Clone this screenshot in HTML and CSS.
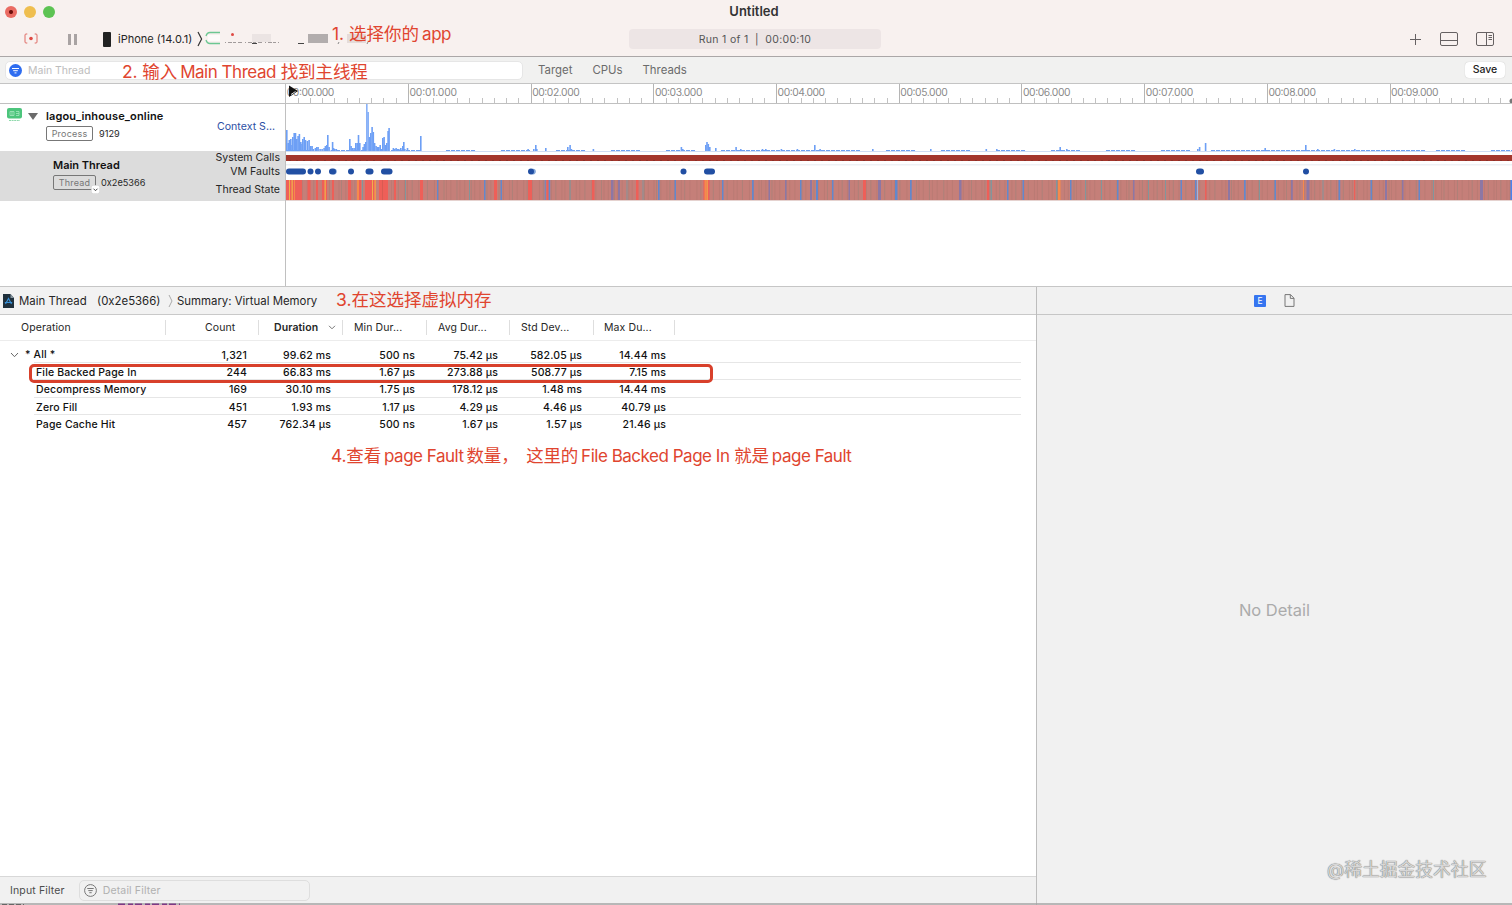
FILE: index.html
```html
<!DOCTYPE html>
<html lang="zh-CN">
<head>
  <meta charset="UTF-8" />
  <meta name="viewport" content="width=device-width, initial-scale=1.0" />
  <title>Untitled</title>
  <link rel="stylesheet" href="styles.css">
</head>
<body>
  <div class="window">
    <header class="titlebar">
      <div class="lights"><i class="red"></i><i class="yellow"></i><i class="green"></i></div>
      <div class="window-title">Untitled</div>
      <div class="toolbar">
        <svg class="record" width="14" height="14" viewBox="0 0 14 14" fill="none" stroke="#df6a64" stroke-width="1"><path d="M3.300 2H2Q1 2 1 3v7q0 1 1 1h1.300M10.700 2H12q1 0 1 1v7q0 1-1 1h-1.300"/><circle cx="7" cy="6.500" r="1.800" fill="#df4a44" stroke="none"/></svg>
        <div class="pause"><i></i><i></i></div>
        <div class="phone"></div>
        <span class="device">iPhone (14.0.1)</span>
        <svg class="crumb" width="6" height="16" viewBox="0 0 6 16" fill="none" stroke="#333" stroke-width="1.2"><path d="M1 1l3.600 7L1 15"/></svg>
        <svg class="masked" width="170" height="18" viewBox="0 0 170 18">
          <path d="M15 2.500H5Q2 2.500 1 6M1 10Q2 13.500 5 13.500h10" fill="none" stroke="#6cc792" stroke-width="1.300"/>
          <rect x="3" y="5" width="12" height="6" fill="#fff" opacity=".7"/>
          <circle cx="27.500" cy="4.500" r="1.500" fill="#df4a44"/>
          <path d="M20 12.500h54" stroke="#a19b9b" stroke-width="1" stroke-dasharray="1 2 4 1 3 2 4 3"/>
          <path d="M47 13.500h5M93 13.500h6" stroke="#444" stroke-width="1"/>
          <rect x="47" y="4" width="19" height="8" fill="#ebe4e3"/>
          <rect x="103" y="4" width="20" height="9" fill="#b2adad"/>
          <rect x="142" y="4" width="19" height="9" fill="#e5dbd9"/>
          <path d="M134 12l-1 2M163 12l-1 2" stroke="#888"/>
        </svg>
        <div class="run-status">Run 1 of 1 &nbsp;|&nbsp; 00:00:10</div>
        <div class="actions">
          <svg width="11" height="11" viewBox="0 0 11 11" stroke="#666162" stroke-width="1"><path d="M5.500 0v11M0 5.500h11"/></svg>
          <svg width="18" height="14" viewBox="0 0 18 14" fill="none" stroke="#666162"><rect x=".5" y=".5" width="17" height="13" rx="1.500"/><path d="M.5 8.500h17"/></svg>
          <svg width="18" height="14" viewBox="0 0 18 14" fill="none" stroke="#666162"><rect x=".5" y=".5" width="17" height="13" rx="1.500"/><path d="M10.500.5v13M12.500 3.500h3.500M12.500 5.500h3.500M12.500 7.500h3.500"/></svg>
        </div>
      </div>
    </header>

    <div class="filterbar">
      <div class="search">
        <svg width="13" height="13" viewBox="0 0 13 13"><circle cx="6.500" cy="6.500" r="6.500" fill="#2f6df0"/><path d="M3 4.500h7M4.200 6.700h4.600M5.500 8.900h2" stroke="#fff"/></svg>
        <span>Main Thread</span>
      </div>
      <div class="scopes"><span>Target</span><span>CPUs</span><span>Threads</span></div>
      <button class="save">Save</button>
    </div>

    <section class="timeline">
      <div class="tracks-side">
        <div class="side-ruler"></div>
        <div class="side-process">
          <svg class="app-icon" width="16" height="15" viewBox="0 0 16 15"><rect width="15" height="10.500" rx="2" fill="#4cc57c"/><path d="M3 3.500h4v4H3zM5 3.500v4M9 3.500h3v4H9M9 5.500h3" fill="none" stroke="#a6e6bf" stroke-width=".8"/><path d="M2 12.500h11" stroke="#8fd9ac" stroke-dasharray="2 .6"/></svg>
          <div class="disclosure"></div>
          <div class="track-name">
            <b>lagou_inhouse_online</b>
            <div><span class="tag">Process</span><small>9129</small></div>
          </div>
          <span class="context">Context S...</span>
        </div>
        <div class="side-thread">
          <div class="track-name">
            <b>Main Thread</b>
            <div><span class="tag tag-thread">Thread<svg class="tag-menu" width="9" height="9" viewBox="0 0 9 9"><rect x=".3" y=".3" width="8.400" height="8.400" rx="2" fill="#fff" stroke="#ccc" stroke-width=".6"/><path d="M2.500 3.700l2 2 2-2" fill="none" stroke="#444"/></svg></span><small>0x2e5366</small></div>
          </div>
          <div class="lanes"><span>System Calls</span><span>VM Faults</span><span>Thread State</span></div>
        </div>
      </div>
      <div class="tracks-main">
        <svg id="ruler" width="1226" height="20"></svg>
        <svg id="context" width="1226" height="48"></svg>
        <svg id="thread" width="1226" height="50"></svg>
      </div>
    </section>

    <div class="bottom">
      <section class="detail">
        <div class="path">
          <svg width="11" height="14" viewBox="0 0 11 14"><path d="M0 0h7.500L11 4v10H0z" fill="#20303c"/><path d="M7.500 0L11 4H7.500z" fill="#8796a0"/><path d="M2.500 10L5.500 4.500 8.500 10M1.800 8.500h7.400" fill="none" stroke="#3a91d8" stroke-width="1.100"/></svg>
          <span class="path-thread">Main Thread</span>
          <span class="path-id">(0x2e5366)</span>
          <svg class="path-arrow" width="5" height="14" viewBox="0 0 5 14" fill="none" stroke="#aaa"><path d="M1 1l3 6-3 6"/></svg>
          <span class="path-summary">Summary: Virtual Memory</span>
        </div>
        <div class="grid head">
          <span>Operation</span><span>Count</span>
          <span class="sorted">Duration<svg width="8" height="5" viewBox="0 0 8 5" fill="none" stroke="#777"><path d="M1 .8l3 3 3-3"/></svg></span>
          <span>Min Dur...</span><span>Avg Dur...</span><span>Std Dev...</span><span>Max Du...</span>
        </div>
        <div class="rows">
          <div class="grid row all"><span><svg width="9" height="6" viewBox="0 0 9 6" fill="none" stroke="#666"><path d="M1 1l3.500 3.700L8 1"/></svg>* All *</span><span>1,321</span><span>99.62 ms</span><span>500 ns</span><span>75.42 µs</span><span>582.05 µs</span><span>14.44 ms</span></div>
          <div class="grid row"><span>File Backed Page In</span><span>244</span><span>66.83 ms</span><span>1.67 µs</span><span>273.88 µs</span><span>508.77 µs</span><span>7.15 ms</span><div class="mark"></div></div>
          <div class="grid row"><span>Decompress Memory</span><span>169</span><span>30.10 ms</span><span>1.75 µs</span><span>178.12 µs</span><span>1.48 ms</span><span>14.44 ms</span></div>
          <div class="grid row"><span>Zero Fill</span><span>451</span><span>1.93 ms</span><span>1.17 µs</span><span>4.29 µs</span><span>4.46 µs</span><span>40.79 µs</span></div>
          <div class="grid row"><span>Page Cache Hit</span><span>457</span><span>762.34 µs</span><span>500 ns</span><span>1.67 µs</span><span>1.57 µs</span><span>21.46 µs</span></div>
        </div>
        <div class="footer">
          <span>Input Filter</span>
          <div class="detail-filter">
            <svg width="13" height="13" viewBox="0 0 13 13" fill="none" stroke="#777"><circle cx="6.500" cy="6.500" r="5.900"/><path d="M3.300 4.500h6.400M4.300 6.600h4.400M5.300 8.700h2.400"/></svg>
            Detail Filter
          </div>
        </div>
      </section>
      <aside class="inspector">
        <div class="inspector-tabs">
          <span class="tab-e">E</span>
          <svg width="11" height="13" viewBox="0 0 11 13" fill="none" stroke="#777"><path d="M1 .6h5.500L10 4.200v8.200H1zM6.300.6v3.800H10"/></svg>
        </div>
        <div class="empty">No Detail</div>
      </aside>
    </div>
    <svg class="behind" width="1512" height="3" viewBox="0 0 1512 3"><path d="M0 2h1512" stroke="#a3a3a3" stroke-width="1.500"/><path d="M2 2.500h22" stroke="#666" stroke-dasharray="5 2"/><path d="M118 2.300h62" stroke="#7d3a86" stroke-width="1.400" stroke-dasharray="7 3 5 2"/></svg>
  </div>

  <div class="note note-1">1. 选择你的<i></i><em>app</em></div>
  <div class="note note-2">2. 输入<i></i><em>Main Thread</em> 找到主线程</div>
  <div class="note note-3">3.在这选择虚拟内存</div>
  <div class="note note-4">4.查看<i></i><em>page Fault</em><i></i>数量，<i></i>&nbsp;这里的<i></i><em>File Backed Page In</em> 就是<i></i><em>page Fault</em></div>
  <div class="watermark">@稀土掘金技术社区</div>
  <script src="script.js"></script>
</body>
</html>
```

FILE: styles.css
```css
* { box-sizing: border-box; }
body {
  margin: 0;
  width: 1512px;
  height: 905px;
  overflow: hidden;
  font-family: Inter, "Noto Sans CJK SC", sans-serif;
  font-size: 11px;
  color: #262626;
}
svg { display: block; flex: none; }
.window {
  position: relative;
  height: 905px;
  display: flex;
  flex-direction: column;
  background: #fff;
}

/* title bar */
.titlebar {
  height: 57px;
  background: #f8f1ef;
  border-bottom: 1px solid #aba7a7;
  position: relative;
}
.lights { display: flex; gap: 7px; padding: 6px 0 0 5px; height: 22px; }
.lights i { width: 12px; height: 12px; border-radius: 50%; }
.red { background: radial-gradient(circle, #6d0e0b 0 1.500px, #ea6b62 2.500px); }
.yellow { background: #efbe4f; }
.green { background: #5dc353; }
.window-title {
  position: absolute;
  top: 3px;
  left: 0;
  width: 1508px;
  text-align: center;
  font-size: 13px;
  line-height: 16px;
  font-weight: 600;
  color: #333;
}
.toolbar { display: flex; align-items: center; height: 34px; padding-left: 24px; }
.pause { display: flex; gap: 3px; margin-left: 30px; }
.pause i { width: 3px; height: 11px; background: #a9a3a3; }
.phone { width: 8px; height: 15px; background: #222; border-radius: 1px; margin-left: 26px; }
.device { width: 74px; margin-left: 7px; white-space: nowrap; }
.crumb { margin-left: 5px; }
.masked { margin-left: 2px; }
.run-status {
  width: 252px;
  height: 20px;
  margin-left: 254px;
  border-radius: 4px;
  background: #ede5e5;
  color: #555;
  text-align: center;
  line-height: 21px;
  font-size: 10.500px;
  letter-spacing: .3px;
}
.actions { display: flex; align-items: center; gap: 18px; margin-left: auto; padding-right: 18px; }
.actions svg:first-child { margin-right: 1px; }

/* filter bar */
.filterbar {
  height: 27px;
  display: flex;
  align-items: center;
  background: #f1f1f0;
  border-bottom: 1px solid #c4c4c4;
  padding: 0 7px 0 5px;
}
.search {
  width: 518px;
  height: 19px;
  display: flex;
  align-items: center;
  gap: 6px;
  padding-left: 3px;
  background: #fff;
  border: 1px solid #e6e6e6;
  border-radius: 5px;
  color: #bdbdbd;
  font-size: 10.500px;
}
.scopes { display: flex; gap: 20px; margin-left: 15px; color: #6b6b6b; font-size: 11.400px; }
.save {
  width: 40px;
  height: 16px;
  margin-left: auto;
  padding: 0;
  border: 0;
  border-radius: 4px;
  background: #fff;
  box-shadow: 0 0 1px rgba(0,0,0,.25);
  font: 500 10.500px/16px Inter, sans-serif;
  color: #222;
}

/* timeline */
.timeline { display: flex; height: 203px; border-bottom: 1px solid #c6c6c6; }
.tracks-side { width: 286px; border-right: 1px solid #c0c0c0; }
.tracks-main { flex: 1; min-width: 0; }
.side-ruler { height: 20px; border-bottom: 1px solid #c0c0c0; }
.side-process { display: flex; height: 47px; padding-left: 7px; }
.app-icon { margin-top: 4px; }
.disclosure {
  margin: 9px 8px 0 5px;
  height: 0;
  border: 5px solid transparent;
  border-top: 7px solid #6b6b6b;
  border-bottom: 0;
}
.track-name b { display: block; font-weight: 600; font-size: 11px; letter-spacing: .15px; line-height: 14px; color: #111; white-space: nowrap; }
.side-process .track-name { padding-top: 5px; width: 171px; }
.track-name div { display: flex; align-items: center; margin-top: 3px; }
.track-name small { font-size: 9.200px; margin-left: 6px; }
.tag {
  position: relative;
  width: 47px;
  height: 15px;
  border: 1px solid #777;
  border-radius: 2px;
  text-align: center;
  font-size: 9px;
  line-height: 13px;
  letter-spacing: .2px;
  color: #777;
}
.tag-thread { width: 43px; }
.tag-menu { position: absolute; right: -5px; bottom: -5px; }
.context { padding-top: 16px; line-height: 14px; font-size: 10.600px; color: #2d50a5; white-space: nowrap; }
.side-thread {
  height: 50px;
  display: flex;
  justify-content: space-between;
  background: #dcdcdc;
  padding: 0 5px 0 53px;
}
.side-thread .track-name { padding-top: 7px; }
.side-thread .track-name b { letter-spacing: 0; }
.side-thread .track-name div { margin-top: 3px; }
.side-thread small { margin-left: 5px; }
.lanes { display: flex; flex-direction: column; align-items: flex-end; font-size: 10.600px; line-height: 14px; }
.lanes span:nth-child(3) { margin-top: 4px; }
#ruler { border-bottom: 1px solid #c0c0c0; }
#ruler text { font-size: 10.300px; fill: #8a8a8a; }

/* detail */
.bottom { display: flex; height: 618px; }
.detail { width: 1037px; border-right: 1px solid #bdbdbd; display: flex; flex-direction: column; }
.path {
  height: 28px;
  display: flex;
  align-items: center;
  padding-left: 3px;
  background: #f2f2f2;
  border-bottom: 1px solid #c9c9c9;
  font-size: 11.400px;
}
.path span { white-space: nowrap; }
.path-thread { width: 78px; margin-left: 5px; }
.path-id { width: 64px; }
.path-arrow { margin: 0 4px 0 7px; }
.grid { display: grid; grid-template-columns: 166px 93px 84px 84px 83px 84px 81px; }
.head { height: 26px; border-bottom: 1px solid #ececec; font-size: 10.500px; align-items: center; }
.head span { border-right: 1px solid #dedede; height: 15px; line-height: 15px; padding-left: 11px; white-space: nowrap; letter-spacing: .1px; }
.head span:nth-child(1) { padding-left: 21px; }
.head span:nth-child(2) { padding-left: 39px; }
.head span:nth-child(3) { padding-left: 15px; }
.head span:nth-child(7) { padding-left: 10px; }
.head .sorted { font-weight: 600; display: flex; align-items: center; gap: 10px; }
.rows { flex: 1; padding-top: 5px; color: #111; }
.row { position: relative; height: 17.350px; line-height: 20px; font-size: 10.500px; font-weight: 500; }
.row span { text-align: right; padding-right: 12px; white-space: nowrap; letter-spacing: .15px; }
.row span:first-child { text-align: left; padding: 0 0 0 36px; }
.row span:nth-child(7) { padding-right: 9px; }
.row.all { line-height: 19px; height: 17px; }
.row.all span:first-child { padding-left: 10px; display: flex; align-items: center; gap: 6px; height: 17px; }
.row:not(:last-child)::after { content: ""; position: absolute; left: 34px; bottom: 0; width: 987px; height: 1px; background: #e6e6e6; }
.mark {
  position: absolute;
  z-index: 1;
  left: 29px;
  top: 1px;
  width: 684px;
  height: 19px;
  border: 3px solid #d8402b;
  border-radius: 5px;
}
.footer {
  height: 29px;
  display: flex;
  align-items: center;
  padding: 0 0 2px 10px;
  background: #f1f1f1;
  border-top: 1px solid #d8d8d8;
  color: #4c4c4c;
  font-size: 10.500px;
  letter-spacing: .15px;
}
.detail-filter {
  width: 231px;
  height: 21px;
  margin-left: 14px;
  display: flex;
  align-items: center;
  gap: 6px;
  padding-left: 4px;
  border: 1px solid #dedede;
  border-radius: 5px;
  color: #b0b0b0;
}
.inspector { flex: 1; background: #f1f1f1; }
.inspector-tabs { height: 28px; display: flex; align-items: center; gap: 18px; padding-left: 217px; border-bottom: 1px solid #c6c6c6; }
.tab-e { width: 12px; height: 12px; background: #3675f0; color: #fff; border-radius: 1px; font-size: 8.500px; line-height: 12px; text-align: center; }
.empty { padding-top: 283px; text-align: center; font-size: 16.500px; line-height: 24px; color: #ababab; }
.behind { position: absolute; left: 0; bottom: 0; }

/* annotations */
.note {
  position: absolute;
  white-space: nowrap;
  color: #e0452f;
  font-size: 17.500px;
  line-height: 24px;
}
.note i { display: inline-block; width: 3px; }
.note em { font-style: normal; font-size: 17px; letter-spacing: -.48px; }
.note-1 { left: 332px; top: 22px; }
.note-2 { left: 122px; top: 60px; letter-spacing: -.1px; }
.note-3 { left: 336px; top: 288px; }
.note-4 { left: 331px; top: 444px; letter-spacing: -.2px; }
.watermark {
  position: absolute;
  left: 1327px;
  top: 858px;
  font-size: 17.800px;
  line-height: 24px;
  white-space: nowrap;
  color: #d6d6d6;
  text-shadow: 0 0 1px #777, 0 0 1px #888;
}
```

FILE: script.js
```js
const NS = 'http://www.w3.org/2000/svg';

function add(svg, tag, attrs, text) {
  const el = document.createElementNS(NS, tag);
  for (const key in attrs) el.setAttribute(key, attrs[key]);
  if (text) el.textContent = text;
  svg.appendChild(el);
}

function rect(svg, x, y, width, height, fill) {
  add(svg, 'rect', { x, y, width, height, fill });
}

// one second = 122.7px, one tick each 100ms
function drawRuler() {
  const svg = document.getElementById('ruler');
  for (let i = 1; i < 100; i++) {
    const major = i % 10 === 0;
    rect(svg, Math.round(i * 12.27 - 0.7), major ? 0 : 14, 1, 20, major ? '#b5b5b5' : '#c2c2c2');
  }
  for (let s = 0; s < 10; s++) {
    add(svg, 'text', { x: s * 122.7 + 0.8, y: 12, textLength: 47.5 }, `00:0${s}.000`);
  }
  add(svg, 'path', { d: 'M3 1.5l9 5.5-9 6z', fill: '#111' });
  add(svg, 'path', { d: 'M5 10.5l4.5-3', stroke: '#ddd' });
  add(svg, 'circle', { cx: 1226, cy: 17, r: 2.5, fill: '#777' });
}

// [x, height] of context switch bars
const bars = [
  [0,21],[1.4,8],[2.5,11],[4,12],[5.2,6],[6,14],[7.4,18],[8.7,18],[10,12],[11.3,15],[12.6,17],[14,9],[15.2,7],
  [16,12],[17.4,14],[18.7,11],[20.6,10],[22.3,11],[24,5],[25.3,5],[26.6,2],[28.6,3],[30,4],[31.3,4],[33.3,2],[35.3,2],
  [37.3,3],[38.6,5],[40,6],[41,16],[42.3,4],[44.6,1],[45.8,9],[46.8,3],[48,2],[49.5,2],
  [63,12],[64.3,5],[65.6,3],[67.3,3],[69,8],[70.4,8],[71.7,16],[73,8],[76.3,4],[77.6,7],[79,9],[80.2,47],[81.5,39],
  [82.6,14],[84,18],[85.3,24],[86.5,19],[87.8,8],[89.3,5],[90.7,4],[92,4],[93.4,6],[94.8,2],[96,13],[97.3,14],
  [98.7,6],[100,8],[101.3,20],[102.3,23],[106.6,3],[108,2],[109.3,3],[110.7,2],[112,2],[114,3],[116,5],[117,9],
  [118,2],[120.7,3],[134,15],[241.3,2],[247,2],[249,6],[250,2],[259,3],[281,4],[283.3,6],[284.6,2],
  [306.6,2],[394.6,4],[396,2],[419,6],[420.2,9],[421.5,7],[423,4],[429,3],[449.3,4],[454,2],[475.7,2],[479,2],
  [494.6,2],[510.6,2],[528,6],[533.3,2],[586,2],[644,2],[699.5,2],[710,2],[773.4,4],[780,2],
  [911,2],[912.8,4],[918.8,8],[978.4,3],[1019,6],[1031,2],[1047.6,2],[1068,2]
];

function drawContext() {
  const svg = document.getElementById('context');
  rect(svg, 0, 47, 1226, 1, '#cfdcf2');
  for (let x = 0; x < 1226; x += 5) {
    if ((x * 7 + x * x) % 11 < 7 || (x > 440 && x < 570) || x > 920 && x < 1138) rect(svg, x, 46, 4, 1, '#6f9ff0');
  }
  bars.forEach(([x, h]) => rect(svg, x, 47 - h, h > 30 ? 1.3 : 1.6, h, '#6d9ff5'));
}

const RED = '#ee5f58', ORANGE = '#f58a4c', YELLOW = '#efb04a', BLUE = '#6288cc', PURPLE = '#8d77a4', TEAL = '#82969b';

// [x, width, color] of thread states
const states = [
  [0,16,RED],[3,1,YELLOW],[5.5,1.3,YELLOW],[8,1,ORANGE],[21.5,3,RED],[30,2,RED],[36,5,RED],[38.5,1.3,YELLOW],
  [46,2,RED],[62,3,RED],[71,2,ORANGE],[73,2,RED],[76,1,TEAL],[79,5,RED],[84,6,RED],[86,1,YELLOW],[88.5,1.2,YELLOW],
  [93,9,RED],[96,1,'#d85b52'],[108,2,RED],[119,1,TEAL],[134,3,RED],[151,1.3,BLUE],[183,1,TEAL],[198,1.5,BLUE],
  [208,3,RED],[214.5,1.5,BLUE],[242,4,RED],[258.7,1,BLUE],[260.5,2,RED],[262.7,1.5,BLUE],[283.6,1,TEAL],
  [306,2.5,RED],[325,2.5,PURPLE],[332,2,PURPLE],[340.5,1,TEAL],[350,2.5,RED],[356.5,1,TEAL],[372,1.6,BLUE],[388.5,1.5,BLUE],
  [417.5,6,RED],[418.5,1.5,ORANGE],[420.5,1.2,YELLOW],[436,1.5,BLUE],[466,1.7,BLUE],[482.5,1.5,PURPLE],[499,1.5,PURPLE],
  [514,1.5,BLUE],[524,2,PURPLE],[530,2,BLUE],[546,1.5,BLUE],[562.5,1.5,PURPLE],[577,3,RED],[592,3,PURPLE],
  [609,2.5,BLUE],[624,1.7,BLUE],[673,2.5,PURPLE],[701,2,RED],[704.5,1.5,TEAL],[721,1.5,BLUE],[736.5,1.5,BLUE],
  [770,1.3,TEAL],[772,2.5,ORANGE],[784,1.5,BLUE],[799,1,TEAL],[815,1,TEAL],[831,1.5,BLUE],[847,1.5,PURPLE],
  [862,1,TEAL],[879,1,TEAL],[894.5,1.5,BLUE],[909,1.5,BLUE],[911,1,'#9fb5dd'],[919,1.5,RED],[942,2,PURPLE],
  [958,1.7,BLUE],[973,1,TEAL],[988.5,1.5,BLUE],[1005,1.8,PURPLE],[1017,1,ORANGE],[1020.5,3,PURPLE],[1036.5,1,TEAL],
  [1052.5,1.7,BLUE],[1068,1.2,RED],[1084.5,1.5,BLUE],[1099,2,PURPLE],[1116,1.5,PURPLE],[1132.5,1.5,BLUE],
  [1147,1,TEAL],[1194,3,PURPLE],[1224.5,2,'#4c83ec']
];

// [center of first dot, center of last dot]
const faults = [
  [3,17],[24.5,24.5],[32,32],[46,47],[65,65],[82.5,84.5],[98,103.5],
  [245,245],[397.5,397.5],[421,426],[913,915],[1020,1020]
];

function drawThread() {
  const svg = document.getElementById('thread');
  rect(svg, 0, 3, 1226, 6, '#a3362c');
  for (let x = 3; x < 1226; x += 7) rect(svg, x, 8, 2, 1, '#8b3029');
  rect(svg, 0, 12, 1226, 1.5, '#edf1f5');

  [48, 247].forEach(cx => add(svg, 'circle', { cx, cy: 19.6, r: 2.8, fill: '#82a6da' }));
  faults.forEach(([a, b]) => add(svg, 'rect', { x: a - 3, y: 16.6, width: b - a + 6, height: 6, rx: 3, fill: '#214fa3' }));

  rect(svg, 0, 28, 1226, 20, '#c57f79');
  for (let i = 0, x = 0; x < 1226; i++) {
    rect(svg, x, 28, 1, 20, i % 3 ? '#ba7b74' : '#ad8179');
    x += 2.5 + (i * 37 % 11) / 2.2;
  }
  states.forEach(([x, w, fill]) => rect(svg, x, 28, w, 20, fill));
  rect(svg, 0, 48, 1226, 1, '#e5d2cf');
}

drawRuler();
drawContext();
drawThread();
```
